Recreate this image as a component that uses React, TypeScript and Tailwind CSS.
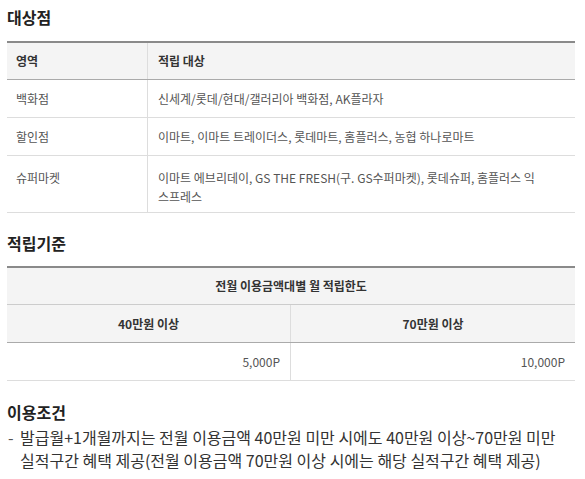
import React from "react";

const font = { fontFamily: '"Noto Sans CJK KR", "Noto Sans", sans-serif' };

export default function App() {
  return (
    <div className="bg-white w-[585px] h-[479px] overflow-hidden pl-[7px] pr-[10px] text-[#333]" style={font}>
      <h2 className="pt-[6px] h-[41px] text-[16px] leading-[22px] font-bold text-[#222]">대상점</h2>
      <div className="border-t-[2px] border-[#8a8a8a]">
        <div className="grid grid-cols-[141px_1fr] bg-[#f4f4f4] h-[37px] border-b border-[#aaa] text-[12px] font-bold text-[#333]">
          <div className="flex items-center pl-[9px] border-r border-[#ddd]">영역</div>
          <div className="flex items-center pl-[10px]">적립 대상</div>
        </div>
        <div className="grid grid-cols-[141px_1fr] h-[38px] border-b border-[#ddd] text-[12px] text-[#555]">
          <div className="flex items-center pl-[9px] border-r border-[#ddd]">백화점</div>
          <div className="flex items-center pl-[10px]">신세계/롯데/현대/갤러리아 백화점, AK플라자</div>
        </div>
        <div className="grid grid-cols-[141px_1fr] h-[38px] border-b border-[#ddd] text-[12px] text-[#555]">
          <div className="flex items-center pl-[9px] border-r border-[#ddd]">할인점</div>
          <div className="flex items-center pl-[10px]">이마트, 이마트 트레이더스, 롯데마트, 홈플러스, 농협 하나로마트</div>
        </div>
        <div className="grid grid-cols-[141px_1fr] h-[57px] border-b border-[#ddd] text-[12px] text-[#555]">
          <div className="pl-[9px] pt-[12px] leading-[19px] border-r border-[#ddd]">슈퍼마켓</div>
          <div className="pl-[10px] pt-[12px] leading-[19px] whitespace-nowrap">
            이마트 에브리데이, GS THE FRESH(구. GS수퍼마켓), 롯데슈퍼, 홈플러스 익
            <br />
            스프레스
          </div>
        </div>
      </div>

      <h2 className="pt-[19px] h-[53px] text-[16px] leading-[22px] font-bold text-[#222]">적립기준</h2>
      <div className="border-t-[2px] border-[#8a8a8a] text-[12px]">
        <div className="flex items-center justify-center bg-[#f4f4f4] h-[37px] border-b border-[#ccc] font-bold text-[#333]">
          전월 이용금액대별 월 적립한도
        </div>
        <div className="grid grid-cols-2 bg-[#f4f4f4] h-[38px] border-b border-[#aaa] font-bold text-[#333]">
          <div className="flex items-center justify-center border-r border-[#ddd]">40만원 이상</div>
          <div className="flex items-center justify-center">70만원 이상</div>
        </div>
        <div className="grid grid-cols-2 h-[38px] border-b border-[#ddd] text-[#555]">
          <div className="flex items-center justify-end pr-[10px] border-r border-[#ddd]">5,000P</div>
          <div className="flex items-center justify-end pr-[10px]">10,000P</div>
        </div>
      </div>

      <h2 className="pt-[20px] h-[45px] text-[16px] leading-[22px] font-bold text-[#222]">이용조건</h2>
      <div className="flex text-[16px] leading-[23px] text-[#333]">
        <span className="w-[13px] pl-[1px] text-[#555]">-</span>
        <p className="whitespace-nowrap">
          발급월+1개월까지는 전월 이용금액 40만원 미만 시에도 40만원 이상~70만원 미만
          <br />
          실적구간 혜택 제공(전월 이용금액 70만원 이상 시에는 해당 실적구간 혜택 제공)
        </p>
      </div>
    </div>
  );
}
